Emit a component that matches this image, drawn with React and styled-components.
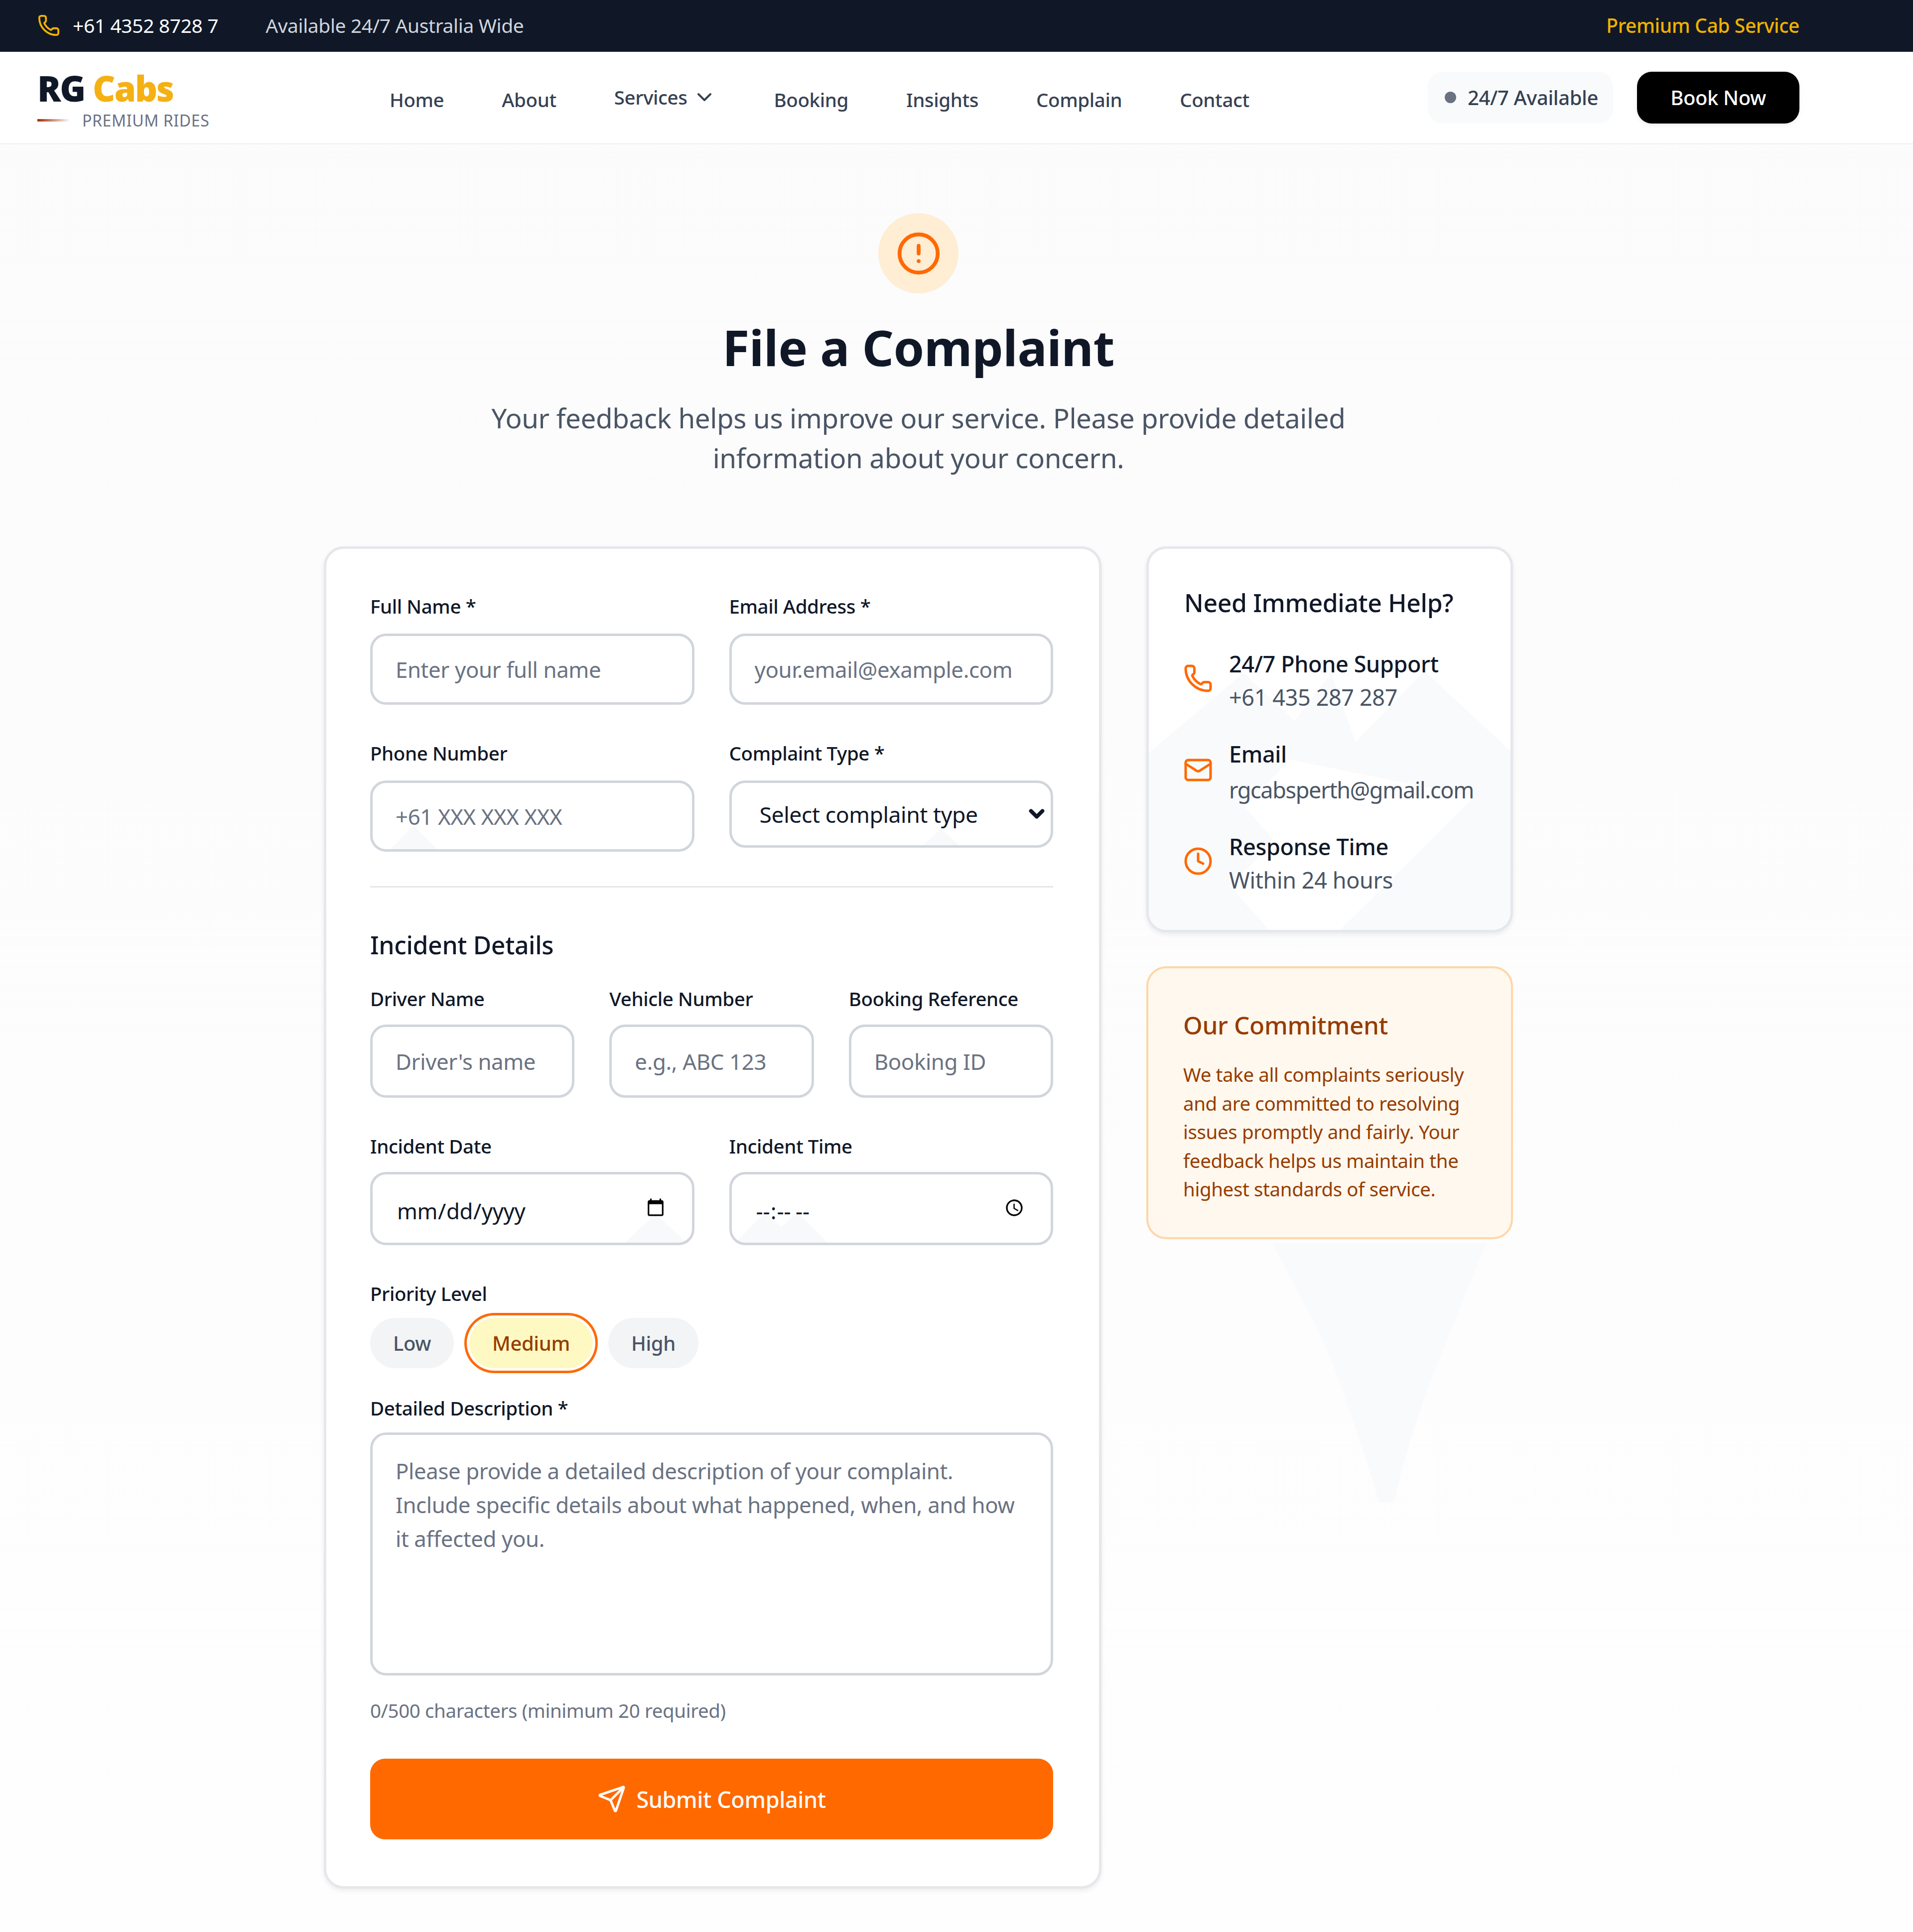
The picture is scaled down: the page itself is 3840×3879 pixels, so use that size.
import React from 'react';
import styled, { createGlobalStyle } from 'styled-components';
import { Phone, ChevronDown, CircleAlert, Mail, Clock, Send } from 'lucide-react';

const GlobalStyle = createGlobalStyle`
  * { box-sizing: border-box; }
  html, body { margin: 0; padding: 0; }
  body {
    background: linear-gradient(180deg, #fbfbfc 0%, #fefefe 100%);
    color: #101828;
    font-family: "Noto Sans", "Open Sans", sans-serif;
    letter-spacing: -0.025em;
  }
  input, select, textarea, button { font-family: inherit; letter-spacing: inherit; }
`;

const Page = styled.div`
  width: 3840px;
  min-height: 3879px;
  overflow: hidden;
`;

const TopBar = styled.div`
  background: #101828;
  height: 104px;
`;

const TopInner = styled.div`
  width: 3687px;
  height: 100%;
  padding: 0 75px 3px;
  display: flex;
  align-items: center;
  font-size: 39px;
`;

const TopPhone = styled.span`
  display: inline-flex;
  align-items: center;
  gap: 25px;
  color: #fff;
  svg { color: #f0b100; }
`;

const TopNote = styled.span`
  margin-left: 95px;
  color: #d1d5dc;
`;

const TopBrand = styled.span`
  margin-left: auto;
  color: #f0b100;
  font-weight: 500;
`;

const Header = styled.header`
  background: #fff;
  height: 186px;
  border-bottom: 3px solid #f3f4f6;
`;

const HeaderInner = styled.div`
  width: 3687px;
  height: 183px;
  padding: 0 75px;
  display: flex;
  align-items: center;
`;

const Logo = styled.div`
  width: 707px;
  display: flex;
  flex-direction: column;
  margin-top: 4px;
`;

const LogoMark = styled.div`
  font-size: 70px;
  line-height: 88px;
  font-weight: 900;
  letter-spacing: -0.03em;
  color: #101828;
  span { color: #f5b014; }
`;

const LogoTag = styled.div`
  display: flex;
  align-items: center;
  gap: 24px;
  font-size: 32px;
  line-height: 42px;
  color: #6a7282;
  letter-spacing: 0.02em;
  &::before {
    content: '';
    width: 66px;
    height: 5px;
    background: linear-gradient(90deg, #9f2d00, rgba(159, 45, 0, 0));
  }
`;

const Nav = styled.nav`
  display: flex;
  align-items: center;
  gap: 116px;
  font-size: 38.5px;
  font-weight: 500;
  color: #364153;
`;

const NavLink = styled.a`
  display: inline-flex;
  align-items: center;
  gap: 10px;
  margin-top: ${({ $raised }) => ($raised ? '-2px' : '8px')};
`;

const HeaderRight = styled.div`
  margin-left: auto;
  display: flex;
  align-items: center;
  gap: 48px;
`;

const StatusPill = styled.div`
  height: 104px;
  width: 372px;
  padding-left: 34px;
  display: flex;
  align-items: center;
  gap: 23px;
  border-radius: 30px;
  background: #f9fafb;
  color: #364153;
  font-size: 40px;
  font-weight: 500;
  &::before {
    content: '';
    width: 23px;
    height: 23px;
    border-radius: 50%;
    background: #6a7282;
  }
`;

const BookButton = styled.button`
  height: 104px;
  width: 326px;
  border: 0;
  border-radius: 30px;
  background: #000;
  color: #fff;
  font-size: 40px;
  font-weight: 500;
  box-shadow: 0 3px 8px rgba(0, 0, 0, 0.08);
`;

const Main = styled.main`
  width: 3687px;
  padding: 138px 0 90px;
  display: flex;
  flex-direction: column;
  align-items: center;
`;

const HeroBadge = styled.div`
  width: 161px;
  height: 161px;
  border-radius: 50%;
  background: #ffedd4;
  color: #ff6900;
  display: flex;
  align-items: center;
  justify-content: center;
`;

const Title = styled.h1`
  margin: 48px 0 42px;
  font-size: 99px;
  line-height: 120px;
  font-weight: 700;
  color: #101828;
`;

const Lead = styled.p`
  margin: 0 0 138px;
  width: 1800px;
  text-align: center;
  font-size: 54.75px;
  line-height: 80px;
  color: #4a5565;
`;

const Columns = styled.div`
  width: 2387px;
  display: grid;
  grid-template-columns: 1561px 736px;
  gap: 90px;
  align-items: start;
`;

const FormCard = styled.form`
  background: #fff;
  border: 5px solid #e5e7eb;
  border-radius: 40px;
  padding: 89px 92px 94px 88px;
  box-shadow: 0 4px 10px rgba(16, 24, 40, 0.08);
`;

const Row = styled.div`
  display: grid;
  grid-template-columns: ${({ $cols }) => `repeat(${$cols}, minmax(0, 1fr))`};
  gap: 70px;
  align-items: start;
  margin-bottom: ${({ $after }) => $after}px;
`;

const Field = styled.div`
  position: relative;
  display: flex;
  flex-direction: column;
  gap: ${({ $gap }) => $gap || 29}px;
`;

const Label = styled.label`
  font-size: 38.5px;
  line-height: 52px;
  font-weight: 500;
  color: #101828;
`;

const InputBox = styled.div`
  position: relative;
`;

const controlBase = `
  display: block;
  width: 100%;
  background: transparent;
  border: 5px solid #d1d5dc;
  border-radius: 32px;
  font-size: 43.8px;
  color: #101828;
  outline: none;
  &::placeholder { color: #6a7282; opacity: 1; }
`;

const TextInput = styled.input`
  ${controlBase}
  position: relative;
  height: ${({ $tall }) => ($tall ? 147 : 143)}px;
  padding: 0 46px;
`;

const PickerInput = styled.input`
  ${controlBase}
  position: relative;
  height: 147px;
  padding: 8px 46px 0 48px;
  letter-spacing: ${({ type }) => (type === 'time' ? '0.09em' : '-0.01em')};
  &::-webkit-calendar-picker-indicator {
    width: 40px;
    height: 40px;
    padding: 0;
    margin: -12px 7px 0 0;
  }
`;

const SelectInput = styled.select`
  ${controlBase}
  position: relative;
  height: 135px;
  padding: 0 56px;
  font-size: 44.5px;
  appearance: none;
`;

const SelectChevron = styled(ChevronDown)`
  position: absolute;
  right: 10px;
  top: 44px;
  pointer-events: none;
  color: #101828;
`;

const Peak = styled.span`
  position: absolute;
  left: ${({ $left }) => $left}px;
  bottom: ${({ $bottom }) => $bottom || 5}px;
  width: ${({ $w }) => $w}px;
  height: ${({ $h }) => $h}px;
  background: #f8f9fb;
  clip-path: polygon(50% 0, 100% 100%, 0 100%);
`;

const Divider = styled.hr`
  border: 0;
  height: 3px;
  background: #e5e7eb;
  margin: 0 0 78px;
`;

const SectionTitle = styled.h3`
  margin: 0 0 44px;
  font-size: 50px;
  line-height: 75px;
  font-weight: 500;
  color: #101828;
`;

const PriorityRow = styled.div`
  display: flex;
  gap: 31px;
  padding-bottom: 54px;
`;

const PriorityPill = styled.button`
  height: 101px;
  padding: 0 46px;
  border: 0;
  border-radius: 999px;
  font-size: 40px;
  font-weight: 500;
  background: ${({ $active }) => ($active ? '#fef9c2' : '#f3f4f6')};
  color: ${({ $active }) => ($active ? '#973c00' : '#4a5565')};
  ${({ $active }) => $active && 'box-shadow: 0 0 0 5px #fff, 0 0 0 10px #ff6900;'}
`;

const Description = styled.textarea`
  ${controlBase}
  height: 488px;
  padding: 38px 50px 0 46px;
  line-height: 68px;
  resize: none;
`;

const Counter = styled.p`
  margin: 44px 0 71px;
  font-size: 38.5px;
  line-height: 52px;
  color: #6a7282;
`;

const SubmitButton = styled.button`
  width: 100%;
  height: 162px;
  border: 0;
  border-radius: 30px;
  background: #ff6900;
  color: #fff;
  font-size: 45px;
  font-weight: 500;
  display: flex;
  align-items: center;
  justify-content: center;
  gap: 20px;
`;

const Side = styled.aside`
  position: relative;
  display: flex;
  flex-direction: column;
  gap: 68px;
`;

const HelpCard = styled.div`
  position: relative;
  overflow: hidden;
  background: #fff;
  border: 5px solid #e5e7eb;
  border-radius: 40px;
  height: 775px;
  padding: 71px 70px 0 71px;
  box-shadow: 0 4px 10px rgba(16, 24, 40, 0.08);
`;

const HelpBackdrop = styled.svg`
  position: absolute;
  left: -5px;
  top: -5px;
  width: 736px;
  height: 775px;
`;

const HelpTitle = styled.h3`
  position: relative;
  margin: 0 0 51px;
  font-size: 50px;
  line-height: 75px;
  font-weight: 500;
  color: #101828;
`;

const HelpRows = styled.div`
  position: relative;
  display: flex;
  flex-direction: column;
  gap: 47px;
`;

const HelpRow = styled.div`
  display: flex;
  align-items: center;
  gap: 32px;
  svg { flex: none; color: #ff6900; margin: -8px 0 0 -2px; }
`;

const HelpHead = styled.div`
  font-size: 45px;
  line-height: 67px;
  font-weight: 500;
  color: #101828;
`;

const HelpValue = styled.div`
  font-size: 45px;
  line-height: 67px;
  margin-top: ${({ $offset }) => $offset || 0}px;
  letter-spacing: ${({ $tight }) => ($tight ? '-0.03em' : 'inherit')};
  color: #4a5565;
  white-space: nowrap;
`;

const CommitmentCard = styled.div`
  position: relative;
  background: #fff8ee;
  border: 4px solid #ffd6a7;
  border-radius: 40px;
  height: 548px;
  padding: 77px 70px 0;
`;

const CommitmentTitle = styled.h3`
  margin: 0 0 33px;
  font-size: 49.5px;
  line-height: 75px;
  font-weight: 500;
  color: #973c00;
`;

const CommitmentText = styled.p`
  margin: 0;
  font-size: 38.5px;
  line-height: 57.5px;
  color: #973c00;
`;

const PinTip = styled.svg`
  position: absolute;
  left: 253px;
  top: 1400px;
  width: 429px;
  height: 530px;
`;

const helpContacts = [
  { Icon: Phone, head: '24/7 Phone Support', value: '+61 435 287 287' },
  { Icon: Mail, head: 'Email', value: 'rgcabsperth@gmail.com', offset: 5, tight: true },
  { Icon: Clock, head: 'Response Time', value: 'Within 24 hours' },
];

const navItems = ['Home', 'About', 'Services', 'Booking', 'Insights', 'Complain', 'Contact'];

export default function App() {
  return (
    <Page>
      <GlobalStyle />
      <TopBar>
        <TopInner>
          <TopPhone>
            <Phone size={46} strokeWidth={2} />
            +61 4352 8728 7
          </TopPhone>
          <TopNote>Available 24/7 Australia Wide</TopNote>
          <TopBrand>Premium Cab Service</TopBrand>
        </TopInner>
      </TopBar>

      <Header>
        <HeaderInner>
          <Logo>
            <LogoMark>
              RG <span>Cabs</span>
            </LogoMark>
            <LogoTag>PREMIUM RIDES</LogoTag>
          </Logo>
          <Nav>
            {navItems.map((item) => (
              <NavLink key={item} $raised={item === 'Services'}>
                {item}
                {item === 'Services' && <ChevronDown size={48} />}
              </NavLink>
            ))}
          </Nav>
          <HeaderRight>
            <StatusPill>24/7 Available</StatusPill>
            <BookButton type="button">Book Now</BookButton>
          </HeaderRight>
        </HeaderInner>
      </Header>

      <Main>
        <HeroBadge>
          <CircleAlert size={92} strokeWidth={2} />
        </HeroBadge>
        <Title>File a Complaint</Title>
        <Lead>
          Your feedback helps us improve our service. Please provide detailed information about your
          concern.
        </Lead>

        <Columns>
          <FormCard>
            <Row $cols={2} $after={71}>
              <Field>
                <Label>Full Name *</Label>
                <TextInput placeholder="Enter your full name" />
              </Field>
              <Field>
                <Label>Email Address *</Label>
                <TextInput placeholder="your.email@example.com" />
              </Field>
            </Row>
            <Row $cols={2} $after={69}>
              <Field>
                <Label>Phone Number</Label>
                <InputBox>
                  <Peak $left={41} $w={93} $h={48} />
                  <TextInput placeholder="+61 XXX XXX XXX" />
                </InputBox>
              </Field>
              <Field>
                <Label>Complaint Type *</Label>
                <InputBox>
                  <Peak $left={389} $w={73} $h={33} />
                  <SelectInput defaultValue="">
                    <option value="">Select complaint type</option>
                  </SelectInput>
                  <SelectChevron size={46} strokeWidth={4} />
                </InputBox>
              </Field>
            </Row>

            <Divider />
            <SectionTitle>Incident Details</SectionTitle>

            <Row $cols={3} $after={71}>
              <Field $gap={26}>
                <Label>Driver Name</Label>
                <TextInput placeholder="Driver's name" $tall />
              </Field>
              <Field $gap={26}>
                <Label>Vehicle Number</Label>
                <TextInput placeholder="e.g., ABC 123" $tall />
              </Field>
              <Field $gap={26}>
                <Label>Booking Reference</Label>
                <TextInput placeholder="Booking ID" $tall />
              </Field>
            </Row>

            <Row $cols={2} $after={71}>
              <Field $gap={26}>
                <Label>Incident Date</Label>
                <InputBox>
                  <Peak $left={511} $w={124} $h={58} />
                  <PickerInput type="date" />
                </InputBox>
              </Field>
              <Field $gap={26}>
                <Label>Incident Time</Label>
                <InputBox>
                  <Peak $left={12} $w={124} $h={62} />
                  <Peak $left={74} $w={124} $h={62} />
                  <PickerInput type="time" />
                </InputBox>
              </Field>
            </Row>

            <Field $gap={23}>
              <Label>Priority Level</Label>
              <PriorityRow>
                <PriorityPill type="button">Low</PriorityPill>
                <PriorityPill type="button" $active>
                  Medium
                </PriorityPill>
                <PriorityPill type="button">High</PriorityPill>
              </PriorityRow>
            </Field>

            <Field $gap={23}>
              <Label>Detailed Description *</Label>
              <Description placeholder="Please provide a detailed description of your complaint. Include specific details about what happened, when, and how it affected you." />
            </Field>
            <Counter>0/500 characters (minimum 20 required)</Counter>

            <SubmitButton type="button">
              <Send size={58} strokeWidth={2} />
              Submit Complaint
            </SubmitButton>
          </FormCard>

          <Side>
            <PinTip viewBox="2555 2497 429 530" aria-hidden="true">
              <path
                d="M2555 2497 L2652 2680 Q2700 2790 2770 3017 L2799 3017 Q2830 2880 2888 2734 L2984 2497 Z"
                fill="#f9fafc"
              />
            </PinTip>
            <HelpCard>
              <HelpBackdrop viewBox="2302 1097 736 775" aria-hidden="true">
                <polygon
                  points="2302,1516 2497,1351 2600,1447 2673,1351 2722,1490 2860,1347 3038,1512 3038,1872 2686,1872 2960,1600 2590,1525 2500,1620 2560,1690 2469,1778 2553,1872 2302,1872"
                  fill="#f9fafb"
                />
              </HelpBackdrop>
              <HelpTitle>Need Immediate Help?</HelpTitle>
              <HelpRows>
                {helpContacts.map(({ Icon, head, value, offset, tight }) => (
                  <HelpRow key={head}>
                    <Icon size={60} strokeWidth={2} />
                    <div>
                      <HelpHead>{head}</HelpHead>
                      <HelpValue $offset={offset} $tight={tight}>
                        {value}
                      </HelpValue>
                    </div>
                  </HelpRow>
                ))}
              </HelpRows>
            </HelpCard>
            <CommitmentCard>
              <CommitmentTitle>Our Commitment</CommitmentTitle>
              <CommitmentText>
                We take all complaints seriously and are committed to resolving issues promptly and
                fairly. Your feedback helps us maintain the highest standards of service.
              </CommitmentText>
            </CommitmentCard>
          </Side>
        </Columns>
      </Main>
    </Page>
  );
}
